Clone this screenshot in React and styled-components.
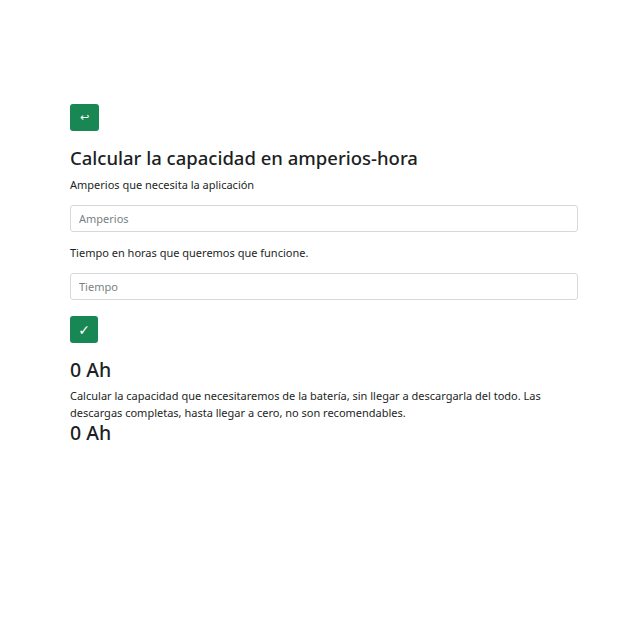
import styled, { createGlobalStyle } from "styled-components";

const GlobalStyle = createGlobalStyle`
  body {
    margin: 0;
    background: #fff;
    color: #1c1f23;
    font-family: "Noto Sans", "Open Sans", sans-serif;
  }
`;

const Page = styled.div`
  padding: 104px 0 0 70px;
  width: 508px;
`;

const GreenButton = styled.button`
  display: flex;
  align-items: center;
  justify-content: center;
  width: ${(p) => p.$w || 29}px;
  height: 27px;
  padding: 0;
  border: none;
  border-radius: 3px;
  background: #198754;
  color: #fff;
  font-size: ${(p) => p.$fs || 12}px;
  font-weight: ${(p) => (p.$bold ? 700 : 400)};
  font-family: "DejaVu Sans", sans-serif;
  margin-bottom: ${(p) => p.$mb || 0}px;
`;

const Title = styled.h1`
  margin: 0 0 6px;
  font-size: 18.5px;
  font-weight: 500;
  line-height: 24px;
`;

const Label = styled.p`
  margin: 0 0 ${(p) => p.$mb || 11}px;
  font-size: 11px;
  line-height: 18px;
`;

const Field = styled.input`
  display: block;
  box-sizing: border-box;
  width: 100%;
  height: 27px;
  padding: 0 8px;
  border: 1px solid #d6d9dc;
  border-radius: 3px;
  font-family: inherit;
  font-size: 11px;
  color: #212529;
  margin-bottom: ${(p) => p.$mb || 12}px;
  &::placeholder {
    color: #7a7f84;
  }
`;

const Result = styled.h2`
  margin: 0 0 ${(p) => p.$mb || 0}px;
  font-size: 19.5px;
  font-weight: 500;
  line-height: 24px;
`;

const Note = styled.p`
  margin: 0;
  font-size: 11px;
  line-height: 17px;
`;

export default function App() {
  return (
    <>
      <GlobalStyle />
      <Page>
        <GreenButton $mb={15} $fs={11}>↩</GreenButton>
        <Title>Calcular la capacidad en amperios-hora</Title>
        <Label>Amperios que necesita la aplicación</Label>
        <Field placeholder="Amperios" />
        <Label>Tiempo en horas que queremos que funcione.</Label>
        <Field placeholder="Tiempo" $mb={16} />
        <GreenButton $w={28} $mb={15} $fs={14} $bold>✓</GreenButton>
        <Result $mb={5}>0 Ah</Result>
        <Note>
          Calcular la capacidad que necesitaremos de la batería, sin llegar a
          descargarla del todo. Las descargas completas, hasta llegar a cero, no
          son recomendables.
        </Note>
        <Result>0 Ah</Result>
      </Page>
    </>
  );
}
